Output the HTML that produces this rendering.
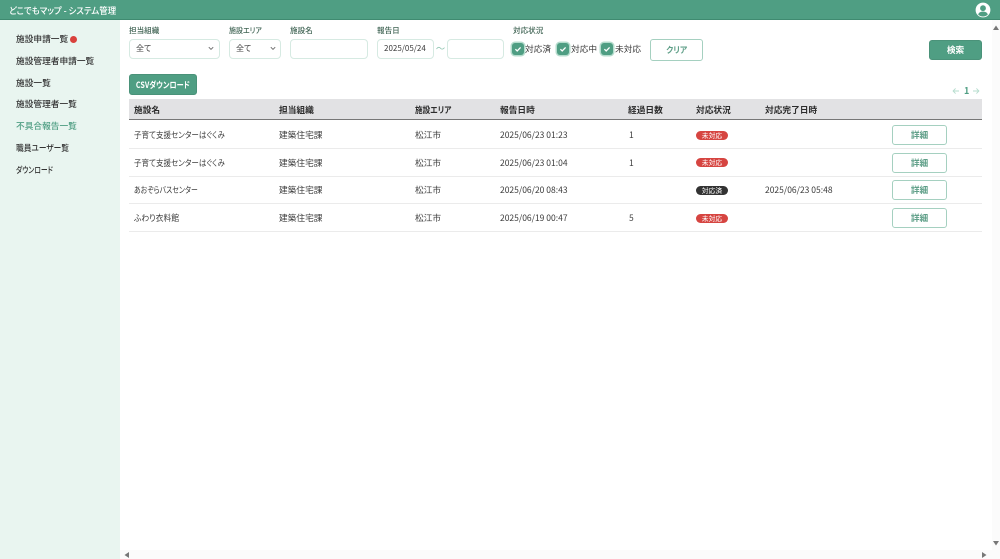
<!DOCTYPE html>
<html lang="ja">
<head>
<meta charset="utf-8">
<title>どこでもマップ - システム管理</title>
<style>
html,body{margin:0;padding:0;width:1000px;height:559px;overflow:hidden;background:#fff}
body{font-family:"Noto Sans CJK JP","Liberation Sans",sans-serif;color:#3c3c3c;font-size:8.5px;position:relative;font-feature-settings:"palt" 1}
#w{position:absolute;left:0;top:0;width:1000px;height:559px;overflow:hidden;filter:blur(.35px)}
.a{position:absolute;white-space:nowrap;line-height:12px;transform-origin:0 50%}
.hd{left:0;top:0;width:1000px;height:19px;background:#4f9e83;border-bottom:1px solid #3f8a70;position:absolute}
.side{position:absolute;left:0;top:20px;width:120px;height:539px;background:#e9f5f0}
.nav{left:16px;font-size:8.7px;color:#333;font-weight:500}
.lb{font-size:7.6px;color:#3f6353;top:25px;font-weight:500}
.box{position:absolute;background:#fff;border:1px solid #d6eae2;border-radius:4px;box-sizing:border-box;height:20px;top:39px}
.chev{position:absolute;top:46px}
.cb{position:absolute;top:43px;width:12px;height:12px;border-radius:3px;background:#4f9e83;box-shadow:0 0 0 1.5px #b5dccd}
.cb svg{position:absolute;left:0;top:0}
.btn{position:absolute;box-sizing:border-box;text-align:center;border-radius:3px}
.g{background:#4f9e83;color:#fff;font-weight:700;border:1px solid #4a9279}
.o{background:#fff;color:#4f9e83;font-weight:700;border:1px solid #a5d0c0;border-radius:3px}
.th{position:absolute;left:129px;top:99px;width:853px;height:21px;background:#e2e2e4;border-bottom:1px solid #777;box-sizing:border-box}
.tt{top:104px;font-weight:700;font-size:8.7px;color:#2c2c2c}
.ln{position:absolute;left:129px;width:853px;height:1px;background:#ebebeb}
.c{font-size:8.5px;color:#3c3c3c}
.bd{position:absolute;left:696px;width:32px;height:9px;border-radius:5px;color:#fff;font-size:6.8px;line-height:9px;text-align:center}
.r{background:#d64541}.k{background:#333}
.d{left:892px;width:55px;height:20px;line-height:18px;font-size:8.7px;color:#5f9f88}
.n1{transform:scaleX(.885)}
</style>
</head>
<body>
<div id="w">
<div class="hd"></div>
<div class="a" style="left:9px;top:4px;color:#fff;font-size:9.2px;font-weight:500;transform:scaleX(.92)">どこでもマップ - システム管理</div>
<svg class="a" style="left:975px;top:2px" width="16" height="16" viewBox="0 0 16 16"><circle cx="8" cy="8" r="7.4" fill="#fff"/><circle cx="8" cy="6.2" r="2.9" fill="#4f9e83"/><path d="M3.2 12.6c.6-2.4 2.6-3 4.8-3s4.2.6 4.8 3c-1.2 1.2-2.9 1.9-4.8 1.9s-3.6-.7-4.8-1.9z" fill="#4f9e83"/></svg>

<div class="side"></div>
<div class="a nav" style="top:33px">施設申請一覧</div>
<div class="a" style="left:70px;top:36px;width:7px;height:7px;border-radius:50%;background:#d9413c"></div>
<div class="a nav" style="top:55px">施設管理者申請一覧</div>
<div class="a nav" style="top:77px">施設一覧</div>
<div class="a nav" style="top:98px">施設管理者一覧</div>
<div class="a nav" style="top:120px;color:#4f9e83">不具合報告一覧</div>
<div class="a nav" style="top:142px;transform:scaleX(.885)">職員ユーザー覧</div>
<div class="a nav" style="top:164px;transform:scaleX(.78)">ダウンロード</div>

<div class="a lb" style="left:129px">担当組織</div>
<div class="a lb" style="left:229px;transform:scaleX(.92)">施設エリア</div>
<div class="a lb" style="left:290px">施設名</div>
<div class="a lb" style="left:377px">報告日</div>
<div class="a lb" style="left:513px">対応状況</div>

<div class="box" style="left:129px;width:91px"></div>
<div class="a" style="left:136px;top:43px;font-size:8px">全て</div>
<svg class="chev" style="left:208px" width="6" height="5" viewBox="0 0 6 5"><path d="M.8 1.2 3 3.4l2.2-2.2" fill="none" stroke="#666" stroke-width=".9"/></svg>
<div class="box" style="left:229px;width:52px"></div>
<div class="a" style="left:236px;top:43px;font-size:8px">全て</div>
<svg class="chev" style="left:270px" width="6" height="5" viewBox="0 0 6 5"><path d="M.8 1.2 3 3.4l2.2-2.2" fill="none" stroke="#666" stroke-width=".9"/></svg>
<div class="box" style="left:290px;width:78px"></div>
<div class="box" style="left:377px;width:57px"></div>
<div class="a" style="left:384px;top:43px;font-size:8px">2025/05/24</div>
<svg class="a" style="left:436px;top:46px" width="9" height="5" viewBox="0 0 9 5"><path d="M.5 3C2 .8 3.5 1 4.5 2.2S7 3.6 8.5 1.6" fill="none" stroke="#8fc4b0" stroke-width=".8"/></svg>
<div class="box" style="left:447px;width:57px"></div>

<div class="cb" style="left:512px"><svg width="12" height="12" viewBox="0 0 12 12"><path d="M3.4 6.2 5.2 8l3.4-3.6" fill="none" stroke="#fff" stroke-width="1.3"/></svg></div>
<div class="a" style="left:525px;top:43px;font-size:8.7px">対応済</div>
<div class="cb" style="left:557px"><svg width="12" height="12" viewBox="0 0 12 12"><path d="M3.4 6.2 5.2 8l3.4-3.6" fill="none" stroke="#fff" stroke-width="1.3"/></svg></div>
<div class="a" style="left:571px;top:43px;font-size:8.7px">対応中</div>
<div class="cb" style="left:601px"><svg width="12" height="12" viewBox="0 0 12 12"><path d="M3.4 6.2 5.2 8l3.4-3.6" fill="none" stroke="#fff" stroke-width="1.3"/></svg></div>
<div class="a" style="left:615px;top:43px;font-size:8.7px">未対応</div>

<div class="btn o" style="left:650px;top:39px;width:53px;height:22px;line-height:20px;font-size:8.7px;color:#5f9f88"><span style="display:inline-block;transform:scaleX(.9)">クリア</span></div>
<div class="btn g" style="left:929px;top:40px;width:53px;height:20px;line-height:18px;font-size:8.7px">検索</div>
<div class="btn g" style="left:129px;top:74px;width:68px;height:21px;line-height:19px;font-size:8.7px"><span style="display:inline-block;transform:scaleX(.82)">CSVダウンロード</span></div>

<svg class="a" style="left:952px;top:87px" width="8" height="8" viewBox="0 0 8 8"><path d="M7 4H1.2M3.6 1.4 1.1 4l2.5 2.6" fill="none" stroke="#b5dccd" stroke-width=".9"/></svg>
<div class="a" style="left:964px;top:85px;font-size:9px;font-weight:700;color:#4f9e83">1</div>
<svg class="a" style="left:972px;top:87px" width="8" height="8" viewBox="0 0 8 8"><path d="M1 4h5.8M4.4 1.4 6.9 4 4.4 6.6" fill="none" stroke="#b5dccd" stroke-width=".9"/></svg>

<div class="th"></div>
<div class="a tt" style="left:134px">施設名</div>
<div class="a tt" style="left:279px">担当組織</div>
<div class="a tt" style="left:415px;transform:scaleX(.88)">施設エリア</div>
<div class="a tt" style="left:500px">報告日時</div>
<div class="a tt" style="left:628px">経過日数</div>
<div class="a tt" style="left:696px">対応状況</div>
<div class="a tt" style="left:765px">対応完了日時</div>

<div class="a c n1" style="left:134px;top:129px">子育て支援センターはぐくみ</div>
<div class="a c" style="left:279px;top:129px;font-size:8.7px">建築住宅課</div>
<div class="a c" style="left:415px;top:129px;font-size:8.7px">松江市</div>
<div class="a c" style="left:500px;top:129px">2025/06/23 01:23</div>
<div class="a c" style="left:629px;top:129px">1</div>
<div class="bd r" style="top:131px">未対応</div>
<div class="btn o d a" style="top:125px">詳細</div>
<div class="ln" style="top:148px"></div>

<div class="a c n1" style="left:134px;top:157px">子育て支援センターはぐくみ</div>
<div class="a c" style="left:279px;top:157px;font-size:8.7px">建築住宅課</div>
<div class="a c" style="left:415px;top:157px;font-size:8.7px">松江市</div>
<div class="a c" style="left:500px;top:157px">2025/06/23 01:04</div>
<div class="a c" style="left:629px;top:157px">1</div>
<div class="bd r" style="top:158px">未対応</div>
<div class="btn o d a" style="top:153px">詳細</div>
<div class="ln" style="top:176px"></div>

<div class="a c" style="left:134px;top:184px;transform:scaleX(.81)">あおぞらバスセンター</div>
<div class="a c" style="left:279px;top:184px;font-size:8.7px">建築住宅課</div>
<div class="a c" style="left:415px;top:184px;font-size:8.7px">松江市</div>
<div class="a c" style="left:500px;top:184px">2025/06/20 08:43</div>
<div class="bd k" style="top:186px">対応済</div>
<div class="a c" style="left:765px;top:184px">2025/06/23 05:48</div>
<div class="btn o d a" style="top:180px">詳細</div>
<div class="ln" style="top:203px"></div>

<div class="a c" style="left:134px;top:212px;transform:scaleX(.92)">ふわり衣料館</div>
<div class="a c" style="left:279px;top:212px;font-size:8.7px">建築住宅課</div>
<div class="a c" style="left:415px;top:212px;font-size:8.7px">松江市</div>
<div class="a c" style="left:500px;top:212px">2025/06/19 00:47</div>
<div class="a c" style="left:629px;top:212px">5</div>
<div class="bd r" style="top:214px">未対応</div>
<div class="btn o d a" style="top:208px">詳細</div>
<div class="ln" style="top:231px"></div>

<div class="a" style="left:992px;top:20px;width:8px;height:539px;background:#fbfbfb"></div>
<div class="a" style="left:120px;top:550px;width:880px;height:9px;background:#fbfbfb"></div>
<svg class="a" style="left:992px;top:24px" width="8" height="8" viewBox="0 0 8 8"><path d="M4 1.5 7 6H1z" fill="#777"/></svg>
<svg class="a" style="left:992px;top:539px" width="8" height="8" viewBox="0 0 8 8"><path d="M4 6.5 7 2H1z" fill="#777"/></svg>
<svg class="a" style="left:123px;top:551px" width="8" height="8" viewBox="0 0 8 8"><path d="M1.5 4 6 1v6z" fill="#777"/></svg>
<svg class="a" style="left:980px;top:551px" width="8" height="8" viewBox="0 0 8 8"><path d="M6.5 4 2 1v6z" fill="#777"/></svg>
</div>
</body>
</html>
